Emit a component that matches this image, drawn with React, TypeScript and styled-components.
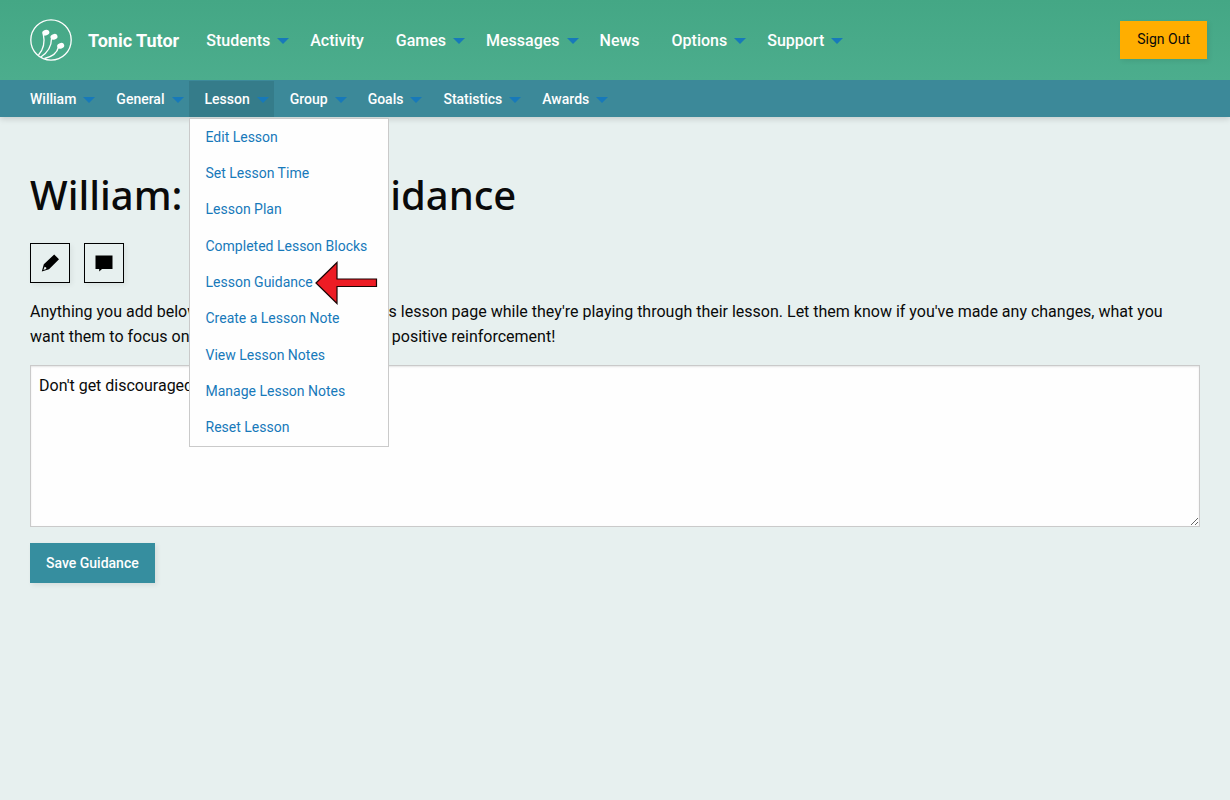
import React from 'react';
import styled, { createGlobalStyle, css } from 'styled-components';

const GlobalStyle = createGlobalStyle`
  *, *::before, *::after { box-sizing: border-box; }
  body {
    margin: 0;
    background: #e7f0ef;
    color: #0a0a0a;
    font-family: Roboto, "Liberation Sans", sans-serif;
    font-size: 16px;
    line-height: 25px;
  }
`;

const Header = styled.header`
  position: relative;
  box-shadow: 0 2px 6px rgba(0, 0, 0, 0.15);
`;

const TopBar = styled.div`
  display: flex;
  align-items: center;
  height: 80px;
  padding: 0 23px 0 30px;
  background: linear-gradient(#44a785, #4cad8d);
`;

const Brand = styled.a`
  display: flex;
  align-items: center;
  gap: 16px;
  margin-right: 11px;
  color: #fefefe;
  font-size: 18px;
  font-weight: 700;
  text-decoration: none;
`;

const SubBar = styled.div`
  height: 37px;
  padding: 1px 14px 0;
  background: #3c8999;
`;

const NavList = styled.ul<{ $small?: boolean }>`
  display: flex;
  margin: 0;
  padding: 0;
  list-style: none;
  font-size: ${(p) => (p.$small ? 14 : 16)}px;
  font-weight: 500;
`;

const NavItem = styled.li`
  position: relative;
`;

const NavLink = styled.a<{ $arrow?: boolean; $active?: boolean }>`
  display: flex;
  align-items: center;
  gap: 7px;
  height: 36px;
  padding: 0 ${(p) => (p.$arrow ? 5 : 16)}px 0 16px;
  color: #fefefe;
  text-decoration: none;
  white-space: nowrap;
  ${(p) => p.$active && css`background: #357c8a;`}
  ${(p) =>
    p.$arrow &&
    css`
      &::after {
        content: '';
        margin-top: 2px;
        border: 6px solid transparent;
        border-top-color: #1779ba;
        border-bottom-width: 0;
      }
    `}
`;

const Menu = styled.ul`
  position: absolute;
  z-index: 2;
  top: 37px;
  left: 0;
  display: grid;
  grid-auto-rows: 1fr;
  min-width: 200px;
  height: 329px;
  margin: 0;
  padding: 0;
  border: 1px solid #cacaca;
  background: #fefefe;
  list-style: none;
  font-weight: 400;
`;

const MenuItem = styled.li`
  display: flex;
  align-items: center;
  padding: 0 16px;
`;

const MenuLink = styled.a`
  color: #1779ba;
  text-decoration: none;
  white-space: nowrap;
`;

const Pointer = styled.svg`
  position: absolute;
  z-index: 3;
  top: 180px;
  left: 125px;
`;

const Button = styled.button`
  border: 0;
  padding: 0 16px;
  height: 40px;
  background: #368e9f;
  color: #fefefe;
  font: 500 14px Roboto, "Liberation Sans", sans-serif;
  box-shadow: 2px 2px 5px rgba(0, 0, 0, 0.08);
  cursor: pointer;
`;

const SignOut = styled(Button)`
  height: 38px;
  margin-left: auto;
  padding: 0 17px 2px;
  background: #ffae00;
  color: #0a0a0a;
  font-weight: 400;
`;

const Main = styled.main`
  padding: 50px 30px;
`;

const Title = styled.h1`
  margin: 0 0 20px;
  font: 500 40px/56px "Noto Sans", "Open Sans", sans-serif;
`;

const Tools = styled.div`
  display: flex;
  gap: 14px;
  margin-bottom: 16px;
`;

const IconButton = styled.button`
  display: grid;
  place-items: center;
  width: 40px;
  height: 40px;
  padding: 0;
  border: 1px solid #000;
  background: transparent;
  box-shadow: 2px 2px 5px rgba(0, 0, 0, 0.06);
`;

const Intro = styled.label`
  display: block;
  margin-bottom: 16px;
`;

const Guidance = styled.textarea`
  display: block;
  width: 100%;
  height: 162px;
  margin-bottom: 16px;
  padding: 8px;
  border: 1px solid #cacaca;
  background: #fefefe;
  color: #0a0a0a;
  font: 400 16px/24px Roboto, "Liberation Sans", sans-serif;
  box-shadow: inset 0 1px 2px rgba(10, 10, 10, 0.1);
  resize: vertical;
`;

const mainNav = [
  { label: 'Students', arrow: true },
  { label: 'Activity', arrow: false },
  { label: 'Games', arrow: true },
  { label: 'Messages', arrow: true },
  { label: 'News', arrow: false },
  { label: 'Options', arrow: true },
  { label: 'Support', arrow: true },
];

const studentNav = ['William', 'General', 'Lesson', 'Group', 'Goals', 'Statistics', 'Awards'];

const lessonMenu = [
  'Edit Lesson',
  'Set Lesson Time',
  'Lesson Plan',
  'Completed Lesson Blocks',
  'Lesson Guidance',
  'Create a Lesson Note',
  'View Lesson Notes',
  'Manage Lesson Notes',
  'Reset Lesson',
];

const Logo = () => (
  <svg width="42" height="42" viewBox="0 0 42 42" fill="none" stroke="#fefefe" aria-hidden="true">
    <circle cx="21" cy="21" r="20.2" strokeWidth="1.3" />
    <path d="M8.5 36C13 31 15.5 25 13.3 15M10.8 38C17 34 21.5 28 21.5 19.5M14.5 39.5C21 38 27 34.5 28.5 28" strokeWidth="1.3" />
    <g fill="#fefefe" stroke="none">
      <ellipse cx="15.8" cy="13.7" rx="3.6" ry="2.8" transform="rotate(-18 15.8 13.7)" />
      <ellipse cx="24" cy="17.8" rx="3.6" ry="2.8" transform="rotate(-18 24 17.8)" />
      <ellipse cx="30.7" cy="26.8" rx="3.6" ry="2.8" transform="rotate(-18 30.7 26.8)" />
    </g>
  </svg>
);

export default function App() {
  return (
    <>
      <GlobalStyle />
      <Header>
        <TopBar>
          <Brand href="#">
            <Logo />
            Tonic Tutor
          </Brand>
          <nav aria-label="Main">
            <NavList>
              {mainNav.map((n) => (
                <NavItem key={n.label}>
                  <NavLink href="#" $arrow={n.arrow}>{n.label}</NavLink>
                </NavItem>
              ))}
            </NavList>
          </nav>
          <SignOut type="button">Sign Out</SignOut>
        </TopBar>
        <SubBar>
          <nav aria-label="Student">
            <NavList $small>
              {studentNav.map((label) => (
                <NavItem key={label}>
                  <NavLink href="#" $arrow $active={label === 'Lesson'}>{label}</NavLink>
                  {label === 'Lesson' && (
                    <>
                      <Menu>
                        {lessonMenu.map((item) => (
                          <MenuItem key={item}>
                            <MenuLink href="#">{item}</MenuLink>
                          </MenuItem>
                        ))}
                      </Menu>
                      <Pointer width="64" height="44" viewBox="0 0 64 44" aria-hidden="true">
                        <path d="M2 22L23 1.500V18H62.500V25.500H23V42.500Z" fill="#ed1c24" stroke="#1a0505" strokeWidth="1.2" />
                      </Pointer>
                    </>
                  )}
                </NavItem>
              ))}
            </NavList>
          </nav>
        </SubBar>
      </Header>
      <Main>
        <Title>William: Lesson Guidance</Title>
        <Tools>
          <IconButton type="button" aria-label="Edit">
            <svg width="18" height="18" viewBox="0 0 18 18" aria-hidden="true">
              <path d="M13.200 .5L18 5.200L8 15.200L.8 17.500L2.800 10.300ZM3.600 12.800L2.400 16L5.300 15.100L5.200 13.400Z" fill="#000" fillRule="evenodd" />
            </svg>
          </IconButton>
          <IconButton type="button" aria-label="Comment">
            <svg width="18" height="18" viewBox="0 0 18 18" aria-hidden="true">
              <path d="M.5 1.500H17.500V15H7L4.200 17.500V15H.5Z" fill="#000" />
            </svg>
          </IconButton>
        </Tools>
        <Intro htmlFor="guidance">
          Anything you add below will appear on the student's lesson page while they're playing through their lesson. Let them know if you've made any changes, what you want them to focus on, or you can give them some positive reinforcement!
        </Intro>
        <Guidance id="guidance" defaultValue="Don't get discouraged!" />
        <Button type="button">Save Guidance</Button>
      </Main>
    </>
  );
}
